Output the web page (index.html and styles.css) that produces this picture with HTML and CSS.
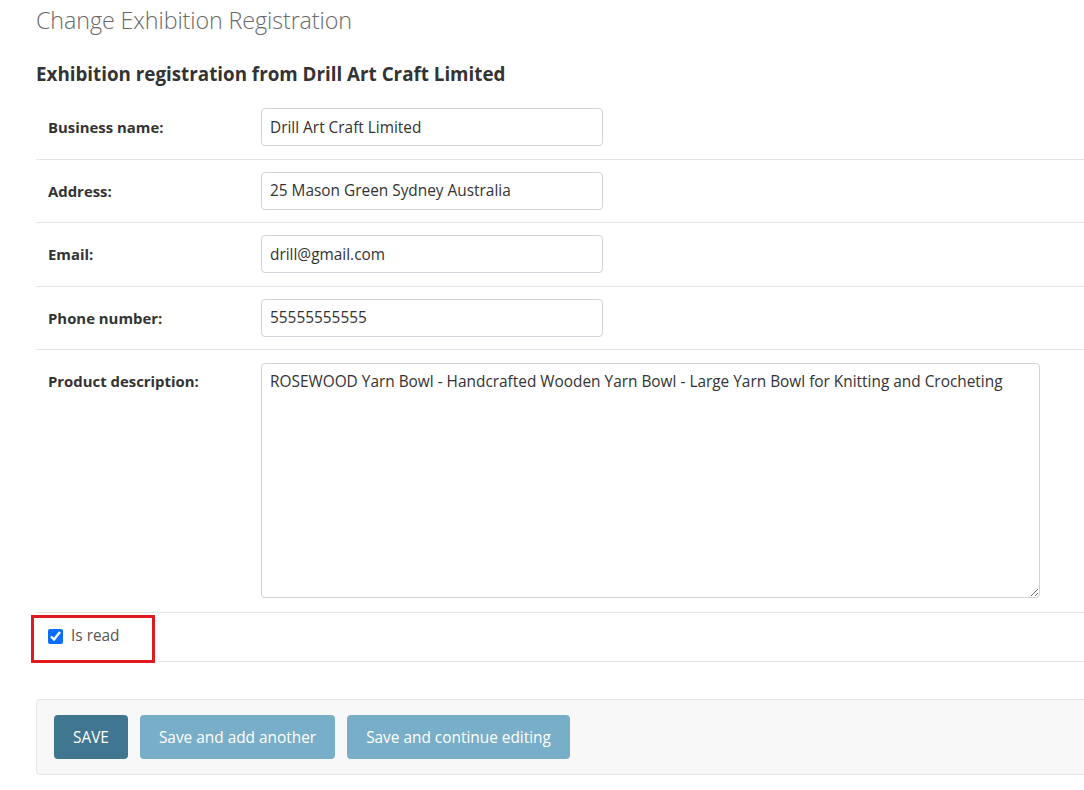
FILE: index.html
```
<!DOCTYPE html>
<html>
<head>
<meta charset="utf-8">
<link rel="stylesheet" href="styles.css">
</head>
<body>
<div class="page">
  <h1 class="title">Change Exhibition Registration</h1>
  <h2 class="subtitle">Exhibition registration from Drill Art Craft Limited</h2>
  <form class="form">
    <div class="row">
      <label class="label">Business name:</label>
      <input class="input" type="text" value="Drill Art Craft Limited">
    </div>
    <div class="row">
      <label class="label">Address:</label>
      <input class="input" type="text" value="25 Mason Green Sydney Australia">
    </div>
    <div class="row">
      <label class="label">Email:</label>
      <input class="input" type="text" value="drill@gmail.com">
    </div>
    <div class="row">
      <label class="label">Phone number:</label>
      <input class="input" type="text" value="55555555555">
    </div>
    <div class="row">
      <label class="label">Product description:</label>
      <textarea class="textarea">ROSEWOOD Yarn Bowl - Handcrafted Wooden Yarn Bowl - Large Yarn Bowl for Knitting and Crocheting</textarea>
    </div>
    <div class="row check-row">
      <input class="check" type="checkbox" checked>
      <span class="check-label">Is read</span>
      <div class="highlight"></div>
    </div>
    <div class="submit-row">
      <button type="button" class="btn btn-primary">SAVE</button>
      <button type="button" class="btn btn-secondary">Save and add another</button>
      <button type="button" class="btn btn-secondary">Save and continue editing</button>
    </div>
  </form>
</div>
</body>
</html>
```
FILE: styles.css
```
html, body {
  margin: 0;
  padding: 0;
  background: #fff;
  overflow: hidden;
}
body {
  font-family: "Open Sans", "Noto Sans", sans-serif;
  color: #333;
}
.page {
  padding-left: 36px;
  width: 1100px;
}
.title {
  margin: 0;
  padding-top: 4px;
  font-size: 23.3px;
  font-weight: 300;
  color: #6a6a6a;
  line-height: 32px;
  letter-spacing: -0.1px;
}
.subtitle {
  margin: 0;
  padding-top: 26px;
  font-size: 18.8px;
  font-weight: 700;
  color: #333;
  line-height: 24px;
}
.form {
  margin-top: 10px;
}
.row {
  position: relative;
  display: flex;
  align-items: flex-start;
  padding: 12.25px 12px 12.25px 12px;
  border-bottom: 1px solid #e6e6e6;
}
.label {
  width: 213px;
  flex: none;
  font-size: 14.9px;
  font-weight: 700;
  color: #333;
  line-height: 38px;
}
.input {
  width: 342px;
  height: 38px;
  box-sizing: border-box;
  border: 1px solid #ced4da;
  border-radius: 4px;
  padding: 0 8px;
  font-family: inherit;
  font-size: 15.4px;
  color: #333;
  outline: none;
}
.textarea {
  width: 779px;
  height: 235px;
  box-sizing: border-box;
  border: 1px solid #ced4da;
  border-radius: 4px;
  padding: 6px 8px;
  font-family: inherit;
  font-size: 15.4px;
  line-height: 24px;
  color: #333;
  resize: both;
  outline: none;
  margin-top: 1px;
  margin-bottom: 1px;
}
.check-row {
  align-items: center;
  padding-top: 15px;
  padding-bottom: 15px;
}
.check {
  margin: 0;
  width: 15px;
  height: 15px;
  accent-color: #0d6efd;
}
.check-label {
  margin-left: 8px;
  font-size: 15.4px;
  color: #555;
  line-height: 20px;
  margin-top: -2px;
}
.highlight {
  position: absolute;
  left: -5px;
  top: 2px;
  width: 118px;
  height: 42px;
  border: 3px solid #e0191f;
}
.submit-row {
  margin-top: 37px;
  display: flex;
  gap: 12px;
  padding: 15px 17px;
  background: #f8f8f8;
  border: 1px solid #e5e5e5;
  border-radius: 4px;
}
.btn {
  height: 44px;
  border: none;
  border-radius: 4px;
  padding: 2px 19px 0;
  font-family: inherit;
  font-size: 15.4px;
  color: #fff;
}
.btn-primary {
  background: #417690;
}
.btn-secondary {
  background: #79aec8;
}
```
